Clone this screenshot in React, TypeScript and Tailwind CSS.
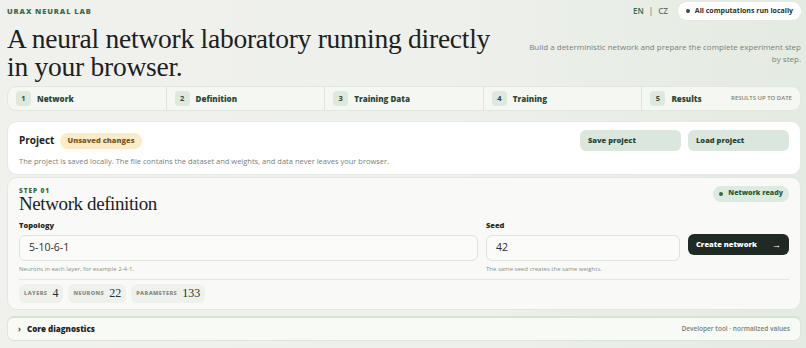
import React from "react";

const sans = { fontFamily: '"Open Sans", "Noto Sans", Arial, sans-serif' };
const serif = { fontFamily: '"Liberation Serif", "DejaVu Serif", serif' };

function StepTab({ n, label, extra, last }: { n: number; label: string; extra?: string; last?: boolean }) {
  return (
    <div className={`flex flex-1 items-center gap-[6px] px-[8px] ${last ? "" : "border-r border-[#dfe5dc]"}`}>
      <span className="flex h-[15px] w-[15px] items-center justify-center rounded-[4px] bg-[#dfe8dc] text-[7.5px] font-bold text-[#2f4a37]">{n}</span>
      <span className="text-[8px] font-extrabold text-[#2c4a34]">{label}</span>
      {extra && <span className="ml-auto text-[6px] font-semibold uppercase text-[#7c8279]">{extra}</span>}
    </div>
  );
}

function Chip({ label, value }: { label: string; value: string }) {
  return (
    <div className="flex h-[19px] items-center gap-[5px] rounded-[6px] bg-[#eff1ec] px-[5px]">
      <span className="text-[5.5px] font-extrabold uppercase tracking-[0.08em] text-[#8a8e87]">{label}</span>
      <span className="text-[12px] leading-none text-[#2a2f2b]" style={serif}>{value}</span>
    </div>
  );
}

export default function App() {
  return (
    <div className="h-[348px] w-[806px] overflow-hidden bg-[linear-gradient(90deg,#f0f1ed_0%,#eef0ec_55%,#e4ebe2_100%)] pl-[7px] pr-[5px] text-[#1e2420]" style={sans}>
      {/* header */}
      <div className="flex items-start justify-between">
        <div className="pt-[6px]">
          <div className="text-[7.5px] font-extrabold uppercase tracking-[0.12em] text-[#3d6a4c]">Urax Neural Lab</div>
          <h1 className="mt-[8px] text-[27.5px] leading-[28px] tracking-[-0.25px] text-[#1b211d]" style={serif}>
            <span className="block">A neural network laboratory running directly</span>
            <span className="block">in your browser.</span>
          </h1>
        </div>
        <div className="flex flex-col items-end">
          <div className="mt-[2px] flex items-center gap-[10px]">
            <div className="flex items-center gap-[5px] text-[8px] font-semibold">
              <span className="text-[#2e6a46]">EN</span>
              <span className="text-[#7b7f7a]">|</span>
              <span className="text-[#6e726d]">CZ</span>
            </div>
            <div className="flex h-[18px] items-center gap-[5px] rounded-full bg-white px-[8px] shadow-[0_0_0_1px_#e6e9e3]">
              <span className="h-[4px] w-[4px] rounded-full bg-[#3b4a40]" />
              <span className="text-[7px] font-bold text-[#2a302b]">All computations run locally</span>
            </div>
          </div>
          <p className="mt-[21px] w-[275px] text-right text-[8px] leading-[12px] text-[#7b807a]">
            Build a deterministic network and prepare the complete experiment step by step.
          </p>
        </div>
      </div>

      {/* steps */}
      <div className="mt-[5px] flex h-[25px] rounded-[9px] border border-[#e2e7df] bg-[#f4f7f2]">
        <StepTab n={1} label="Network" />
        <StepTab n={2} label="Definition" />
        <StepTab n={3} label="Training Data" />
        <StepTab n={4} label="Training" />
        <StepTab n={5} label="Results" extra="Results up to date" last />
      </div>

      {/* project card */}
      <div className="mt-[10px] rounded-[10px] border border-[#e6e9e3] bg-white px-[11px] pb-[6px] pt-[8px]">
        <div className="flex items-center justify-between">
          <div className="flex items-center gap-[6px]">
            <span className="text-[10px] font-bold text-[#1c211d]">Project</span>
            <span className="flex h-[16px] items-center rounded-full bg-[#fbebc6] px-[7px] text-[7.5px] font-extrabold text-[#7b5a22]">Unsaved changes</span>
          </div>
          <div className="flex gap-[7px]">
            <button className="h-[21px] w-[101px] rounded-[6px] bg-[#dbe7dc] px-[8px] text-left text-[7.5px] font-extrabold text-[#2a4632]">Save project</button>
            <button className="h-[21px] w-[101px] rounded-[6px] bg-[#dbe7dc] px-[8px] text-left text-[7.5px] font-extrabold text-[#2a4632]">Load project</button>
          </div>
        </div>
        <p className="mt-[5px] text-[7.5px] text-[#7a7f79]">
          The project is saved locally. The file contains the dataset and weights, and data never leaves your browser.
        </p>
      </div>

      {/* step card */}
      <div className="mt-[2px] rounded-[10px] border border-[#e4e7e1] bg-[#f9faf7] px-[11px] pb-[6px] pt-[8px]">
        <div className="flex items-start justify-between">
          <div>
            <div className="text-[6.5px] font-extrabold uppercase tracking-[0.14em] text-[#3d6a4c]">Step 01</div>
            <h2 className="mt-[-1px] text-[19px] leading-[20px] tracking-[-0.4px] text-[#1d221e]" style={serif}>Network definition</h2>
          </div>
          <div className="flex h-[16px] items-center gap-[5px] rounded-full bg-[#dcebdf] px-[6px]">
            <span className="h-[4px] w-[4px] rounded-full bg-[#2f6a45]" />
            <span className="text-[7px] font-extrabold text-[#2b5a3a]">Network ready</span>
          </div>
        </div>

        <div className="mt-[6px] flex items-start gap-[8px]">
          <div className="w-[459px]">
            <div className="text-[7.5px] font-extrabold text-[#252a26]">Topology</div>
            <div className="mt-[3px] flex h-[26px] items-center rounded-[6px] border border-[#dfe3dc] bg-[#fbfbf9] px-[9px] text-[10.5px] text-[#2a2f2b]">5-10-6-1</div>
            <div className="mt-[4px] text-[6px] text-[#8a8e88]">Neurons in each layer, for example 2-4-1.</div>
          </div>
          <div className="w-[194px]">
            <div className="text-[7.5px] font-extrabold text-[#252a26]">Seed</div>
            <div className="mt-[3px] flex h-[26px] items-center rounded-[6px] border border-[#dfe3dc] bg-[#fbfbf9] px-[9px] text-[10.5px] text-[#2a2f2b]">42</div>
            <div className="mt-[4px] text-[6px] text-[#8a8e88]">The same seed creates the same weights.</div>
          </div>
          <button className="mt-[14px] flex h-[21px] w-[101px] items-center justify-between rounded-[6px] bg-[#1e2a23] px-[8px] text-[7.5px] font-extrabold text-white">
            <span>Create network</span>
            <span className="text-[9px]">→</span>
          </button>
        </div>

        <div className="mt-[5px] border-t border-[#e4e7e1] pt-[4px]">
          <div className="flex gap-[5px]">
            <Chip label="Layers" value="4" />
            <Chip label="Neurons" value="22" />
            <Chip label="Parameters" value="133" />
          </div>
        </div>
      </div>

      {/* diagnostics */}
      <div className="mt-[6px] flex h-[25px] items-center justify-between rounded-[7px] border border-[#dfe5dc] border-t-[2px] border-t-[#d7e2d6] bg-[#f8faf6] px-[10px]">
        <div className="flex items-center gap-[6px]">
          <span className="text-[8px] font-bold text-[#444]">›</span>
          <span className="text-[8px] font-extrabold text-[#1e231f]">Core diagnostics</span>
        </div>
        <span className="text-[6.5px] font-semibold text-[#7a7f79]">Developer tool · normalized values</span>
      </div>
    </div>
  );
}
